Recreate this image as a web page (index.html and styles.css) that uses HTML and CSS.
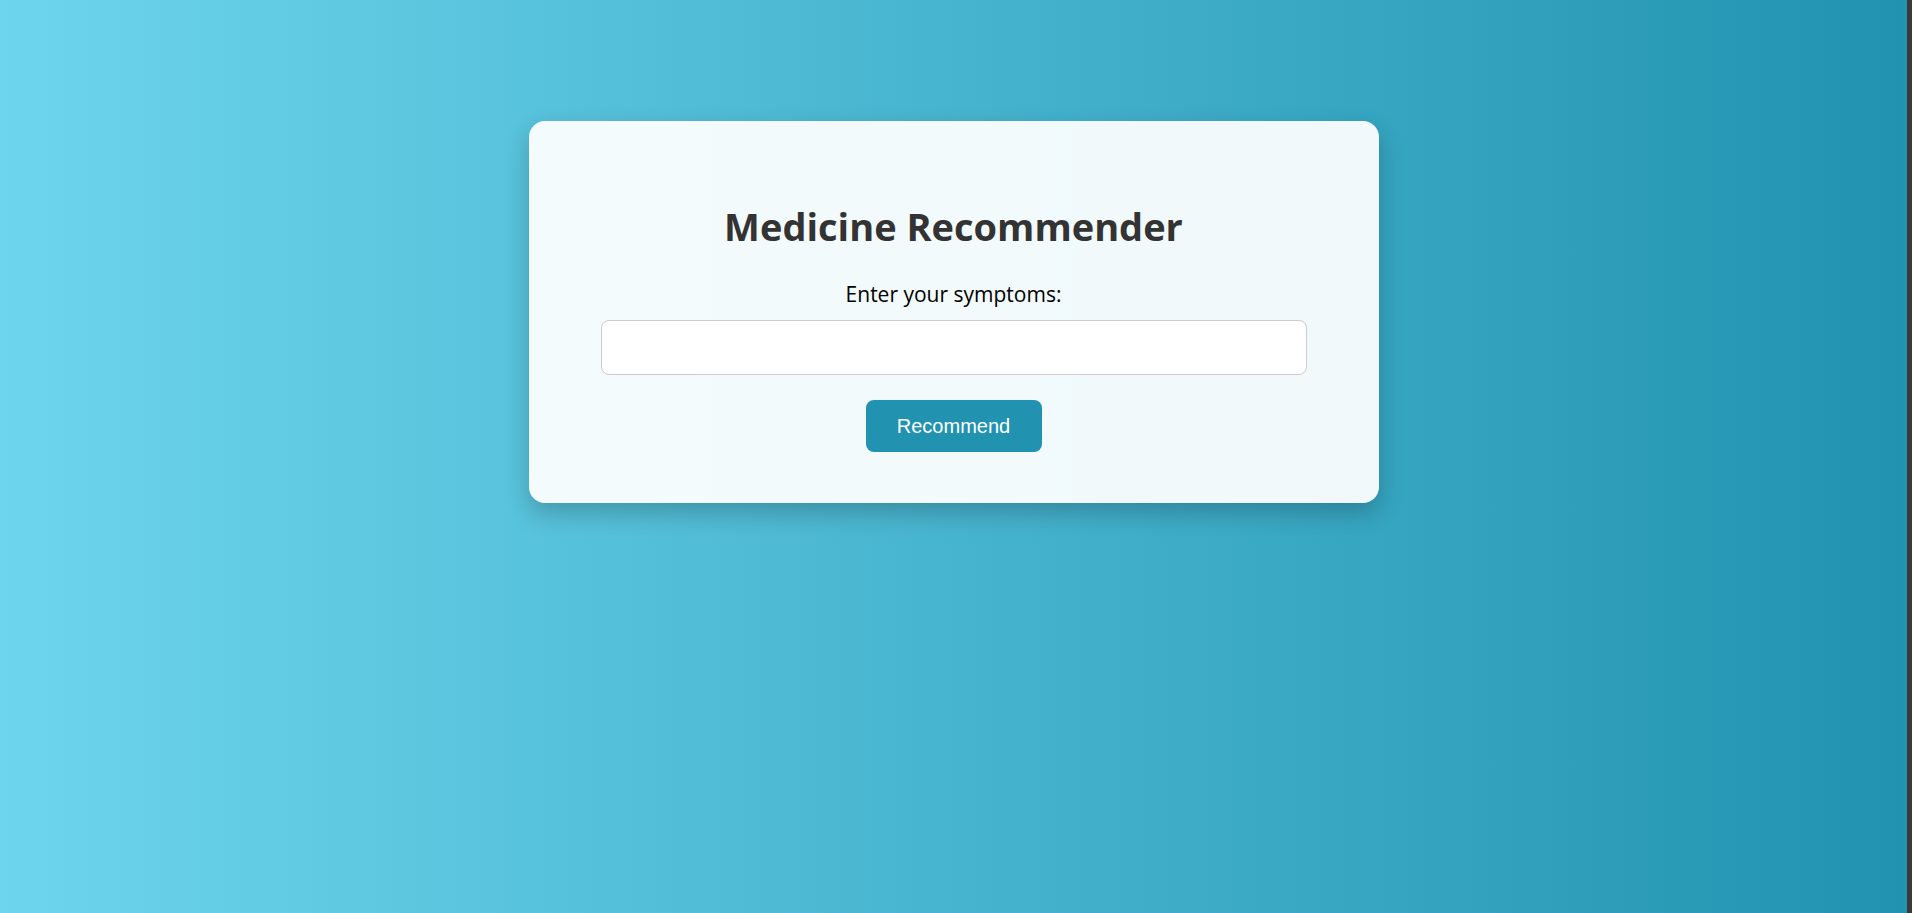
FILE: index.html
```html
<!DOCTYPE html>
<html lang="en">
<head>
<meta charset="utf-8">
<title>Medicine Recommender</title>
<link rel="stylesheet" href="styles.css">
</head>
<body>
<main class="page">
  <section class="card">
    <h1 class="title">Medicine Recommender</h1>
    <form class="form">
      <label class="label" for="symptoms">Enter your symptoms:</label>
      <input class="input" id="symptoms" type="text">
      <button class="button" type="button">Recommend</button>
    </form>
  </section>
</main>
<div class="frame-edge"></div>
</body>
</html>
```
FILE: styles.css
```css
html, body {
  margin: 0;
  padding: 0;
  height: 100%;
}
body {
  display: flex;
  font-family: "Open Sans", "Noto Sans", sans-serif;
  background: #3a3a3a;
  overflow: hidden;
}
.page {
  flex: 1;
  display: flex;
  justify-content: center;
  align-items: flex-start;
  padding-top: 121px;
  background: linear-gradient(to right, #6dd5ed, #2193b0);
}
.frame-edge {
  width: 5px;
  background: #3a3a3a;
}
.card {
  width: 850px;
  box-sizing: border-box;
  padding: 82px 72px 51px;
  background: rgba(255, 255, 255, 0.93);
  border-radius: 16px;
  box-shadow: 0 10px 25px rgba(0, 0, 0, 0.22);
  text-align: center;
}
.title {
  margin: 0 0 31px;
  font-size: 38px;
  line-height: 46px;
  font-weight: 700;
  color: #333;
}
.form {
  display: flex;
  flex-direction: column;
  align-items: center;
}
.label {
  font-size: 21px;
  line-height: 28px;
  color: #000;
  margin-bottom: 12px;
}
.input {
  width: 100%;
  height: 55px;
  box-sizing: border-box;
  border: 1px solid #ccc;
  border-radius: 8px;
  background: #fff;
  font-size: 18px;
  padding: 0 14px;
}
.button {
  margin-top: 25px;
  width: 176px;
  height: 52px;
  border: none;
  border-radius: 8px;
  background: #2193b0;
  color: #fff;
  font-family: "Liberation Sans", Arial, sans-serif;
  font-size: 20px;
}
```
